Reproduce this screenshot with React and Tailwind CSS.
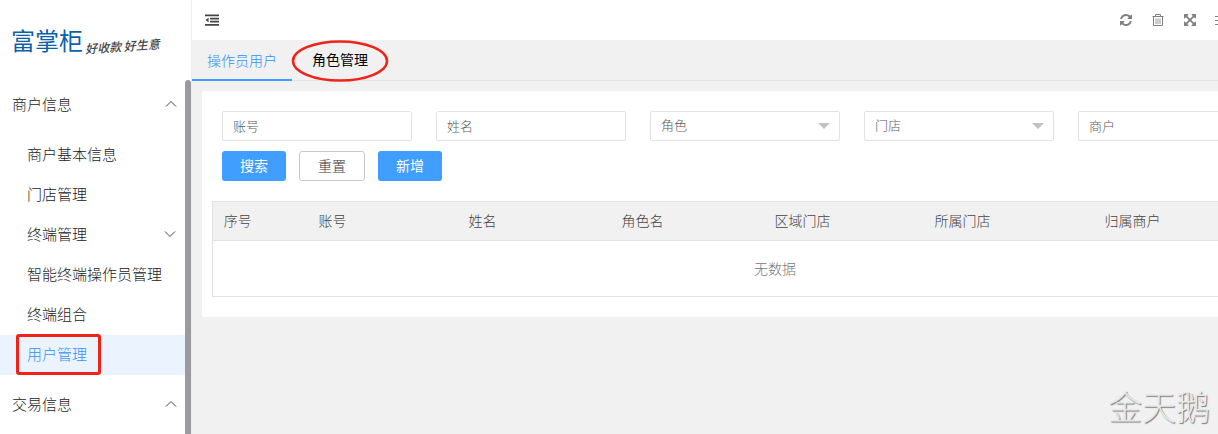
import { useState } from "react";

const menu = [
  {
    title: "商户信息",
    items: [
      { name: "商户基本信息" },
      { name: "门店管理" },
      { name: "终端管理", hasChildren: true },
      { name: "智能终端操作员管理" },
      { name: "终端组合" },
      { name: "用户管理", marked: true },
    ],
  },
  { title: "交易信息", items: [] },
];

const columns = [
  { title: "序号", width: "w-[50px]" },
  { title: "账号", width: "w-[140px]" },
  { title: "姓名", width: "w-[160px]" },
  { title: "角色名", width: "w-[160px]" },
  { title: "区域门店", width: "w-[160px]" },
  { title: "所属门店", width: "w-[160px]" },
  { title: "归属商户", width: "w-[180px]" },
  { title: "", width: "" },
];

const Chevron = ({ down }) => (
  <svg viewBox="0 0 12 8" className="w-3 h-2" fill="none" stroke="#444" strokeWidth="1">
    <path d={down ? "M1 1.5 L6 6.5 L11 1.5" : "M1 6.5 L6 1.5 L11 6.5"} />
  </svg>
);

const OutdentIcon = () => (
  <svg viewBox="0 0 14 12" className="w-3.5 h-3" fill="#444">
    <path d="M0 0.5h14v1.7H0zM5 3.7h9v1.7H5zM5 6.8h9v1.7H5zM0 10h14v1.7H0zM3.6 3.8v4.4L0.4 6z" />
  </svg>
);

const RefreshIcon = () => (
  <svg viewBox="0 0 1792 1792" className="w-3.5 h-3.5" fill="currentColor">
    <path d="M1639 1056q0 5-1 7-64 268-268 434.5t-478 166.5q-146 0-282.5-55t-243.5-157l-129 129q-19 19-45 19t-45-19-19-45v-448q0-26 19-45t45-19h448q26 0 45 19t19 45-19 45l-137 137q71 66 161 102t187 36q134 0 250-65t186-179q11-17 53-117 8-23 30-23h192q13 0 22.5 9.5t9.5 22.5zm25-800v448q0 26-19 45t-45 19h-448q-26 0-45-19t-19-45 19-45l138-138q-148-137-349-137-134 0-250 65t-186 179q-11 17-53 117-8 23-30 23h-199q-13 0-22.5-9.5t-9.5-22.5v-7q65-268 270-434.5t480-166.5q146 0 284 55.5t245 156.5l130-129q19-19 45-19t45 19 19 45z" />
  </svg>
);

const TrashIcon = () => (
  <svg viewBox="0 0 14 14" className="w-3.5 h-3.5" fill="none" stroke="currentColor">
    <path d="M1.5 3.5h11M4.5 3.2V1.5h5v1.7M2.5 3.5v9h9v-9" />
    <path d="M5 5.5v5.5M7 5.5v5.5M9 5.5v5.5" strokeWidth="0.8" />
  </svg>
);

const ExpandIcon = () => (
  <svg viewBox="0 0 1792 1792" className="w-3.5 h-3.5" fill="currentColor">
    <path d="M1411 541l-355 355 355 355 144-144q29-31 70-14 39 17 39 59v448q0 26-19 45t-45 19h-448q-42 0-59-40-17-39 14-69l144-144-355-355-355 355 144 144q31 30 14 69-17 40-59 40h-448q-26 0-45-19t-19-45v-448q0-42 40-59 39-17 69 14l144 144 355-355-355-355-144 144q-19 19-45 19-12 0-24-5-40-17-40-59v-448q0-26 19-45t45-19h448q42 0 59 40 17 39-14 69l-144 144 355 355 355-355-144-144q-31-30-14-69 17-40 59-40h448q26 0 45 19t19 45v448q0 42-39 59-13 5-25 5-26 0-45-19z" />
  </svg>
);

const MoreIcon = () => (
  <svg viewBox="0 0 14 14" className="w-3.5 h-3.5" fill="none" stroke="currentColor">
    <path d="M0 3.5h14M0 7.5h14M0 11.5h14" />
  </svg>
);

const TextField = ({ label }) => (
  <input
    type="text"
    aria-label={label}
    placeholder={label}
    className="w-[190px] h-[30px] shrink-0 px-2.5 pb-0.5 bg-white border border-[#e2e2e2] rounded-xs text-[13px] placeholder:text-[#5c5c5c] outline-none"
  />
);

const SelectField = ({ label }) => (
  <div className="relative shrink-0">
    <select
      aria-label={label}
      className="block w-[190px] h-[30px] px-2.5 pb-0.5 appearance-none bg-white border border-[#e2e2e2] rounded-xs text-[13px] text-[#5c5c5c] outline-none"
    >
      <option>{label}</option>
    </select>
    <svg viewBox="0 0 12 6" className="absolute right-2.5 top-3 w-3 h-1.5 pointer-events-none" fill="#c2c2c2">
      <path d="M0 0h12L6 6z" />
    </svg>
  </div>
);

const Sidebar = () => {
  const [active, setActive] = useState("用户管理");

  return (
    <aside className="w-48 shrink-0 flex flex-col bg-white border-r border-[#ececec]">
      <div className="h-20 shrink-0 flex items-center pl-[11px] whitespace-nowrap">
        <span className="text-[24px] font-normal text-[#0b62a8]">富掌柜</span>
        <span className="ml-0.5 mt-3 text-[12px] font-medium italic text-[#444] -rotate-4">好收款 好生意</span>
      </div>
      <div className="flex flex-1 min-h-0">
        <nav className="flex-1 min-w-0 overflow-hidden text-[15px] text-[#222]">
          {menu.map((group) => (
            <div key={group.title}>
              <button type="button" className="w-full h-[50px] pl-3 pr-2 pb-0.5 flex items-center justify-between">
                {group.title}
                <Chevron />
              </button>
              {group.items.length > 0 && (
                <ul className="py-[5px]">
                  {group.items.map((item) => (
                    <li key={item.name} className="relative">
                      <a
                        href="#"
                        onClick={() => setActive(item.name)}
                        className={`h-10 pl-[27px] pr-[9px] pb-0.5 flex items-center justify-between whitespace-nowrap ${
                          active === item.name ? "bg-[#eaf3fe] text-[#3390f5]" : ""
                        }`}
                      >
                        {item.name}
                        {item.hasChildren && <Chevron down />}
                      </a>
                      {item.marked && (
                        <span className="absolute left-4 -top-px w-[85px] h-[41px] border-3 border-[#f02318] rounded-[3px] pointer-events-none" />
                      )}
                    </li>
                  ))}
                </ul>
              )}
            </div>
          ))}
        </nav>
        <div className="w-1.5 shrink-0 rounded-t-full bg-[#9b9b9f]" />
      </div>
    </aside>
  );
};

const App = () => {
  return (
    <div className="relative h-screen flex overflow-hidden bg-[#f1f1f1] font-['Noto_Sans_CJK_SC',sans-serif] font-light">
      <Sidebar />

      <div className="flex-1 min-w-0 overflow-hidden">
        <div className="min-w-[1166px]">
          <header className="h-10 flex items-center justify-between pl-[13px] pr-[129px] bg-white">
            <button type="button" aria-label="收起菜单"><OutdentIcon /></button>
            <div className="flex items-center gap-[18px] text-[#808080]">
              <button type="button" aria-label="刷新"><RefreshIcon /></button>
              <button type="button" aria-label="清除"><TrashIcon /></button>
              <button type="button" aria-label="全屏"><ExpandIcon /></button>
              <button type="button" aria-label="更多"><MoreIcon /></button>
            </div>
          </header>

          <div className="h-[41px] flex gap-[5px] border-b border-[#e4e4e4] text-sm">
            <button type="button" className="h-[41px] px-[15px] border-b-2 border-[#409eff] text-[#3390f5]">
              操作员用户
            </button>
            <button type="button" className="relative h-10 px-[15px] pb-0.5 text-black font-normal">
              角色管理
              <svg
                viewBox="0 0 98 42"
                className="absolute -left-1.5 top-0 w-[98px] h-[42px] pointer-events-none"
                fill="none"
                stroke="#f02318"
                strokeWidth="2.5"
              >
                <ellipse cx="49" cy="21" rx="47" ry="19.5" />
              </svg>
            </button>
          </div>

          <main className="m-2.5 px-2.5 py-5 bg-white">
            <form className="px-2.5" onSubmit={(e) => e.preventDefault()}>
              <div className="flex gap-6">
                <TextField label="账号" />
                <TextField label="姓名" />
                <SelectField label="角色" />
                <SelectField label="门店" />
                <TextField label="商户" />
              </div>
              <div className="mt-2.5 flex gap-[13px] text-sm">
                <button type="submit" className="w-16 h-[30px] pb-0.5 rounded-[3px] bg-[#409eff] text-white font-normal">搜索</button>
                <button type="reset" className="w-[66px] h-[30px] pb-0.5 rounded-[3px] border border-[#c9c9c9] text-[#333]">重置</button>
                <button type="button" className="w-16 h-[30px] pb-0.5 rounded-[3px] bg-[#409eff] text-white font-normal">新增</button>
              </div>
            </form>

            <table className="mt-5 w-full table-fixed border border-[#e2e2e2] text-sm text-[#444]">
              <thead>
                <tr className="h-[39px] bg-[#f1f1f1] border-b border-[#e2e2e2]">
                  {columns.map((col, i) => (
                    <th key={i} className={`${col.width} pb-0.5 font-light`}>{col.title}</th>
                  ))}
                </tr>
              </thead>
              <tbody>
                <tr className="h-14">
                  <td colSpan={columns.length} className="pb-0.5 text-center text-[#777]">无数据</td>
                </tr>
              </tbody>
            </table>
          </main>
        </div>
      </div>

      <div className="absolute right-2 bottom-1.5 text-[34px] leading-[44px] text-[#e8e8e8] [text-shadow:1px_1px_1px_#777] pointer-events-none">
        金天鹅
      </div>
    </div>
  );
};

export default App;
